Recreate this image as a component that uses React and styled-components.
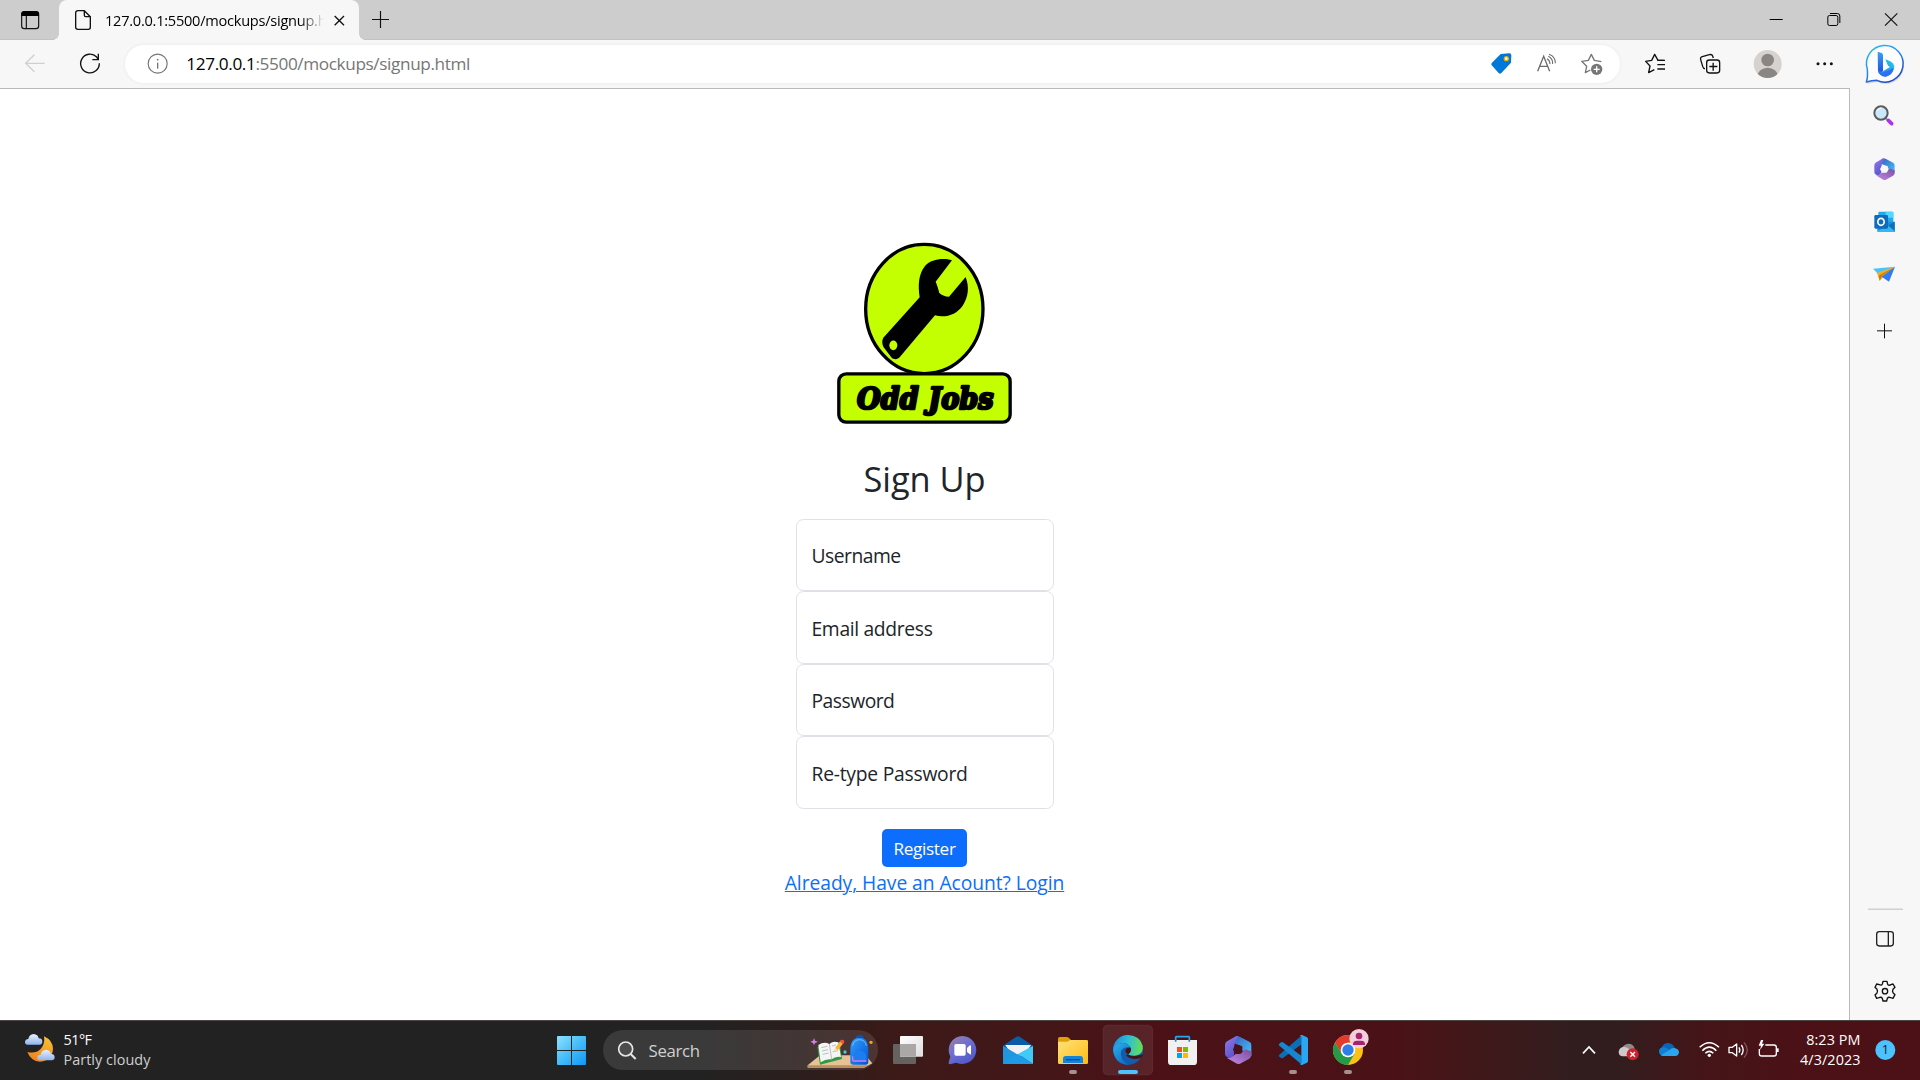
import React from 'react';
import styled, { createGlobalStyle, css } from 'styled-components';

const GlobalStyle = createGlobalStyle`
  *, *::before, *::after { box-sizing: border-box; }
  body {
    margin: 0;
    overflow: hidden;
    background: #fff;
    font-family: "Open Sans", "Noto Sans", sans-serif;
    color: #212529;
  }
`;

/* ---------- shared ---------- */

const Svg = styled.svg`
  display: block;
  flex: none;
`;

/* Icons are drawn on a grid of three units to the pixel. */
const Glyph = ({ box, children }) => (
  <Svg width={box[2] / 3} height={box[3] / 3} viewBox={box.join(' ')} fill="none">
    {children}
  </Svg>
);

const Spacer = styled.div`
  flex: 1;
`;

const Screen = styled.div`
  display: flex;
  flex-direction: column;
  width: 1920px;
  height: 1080px;
  overflow: hidden;
`;

/* ---------- title bar ---------- */

const TitleBar = styled.header`
  display: flex;
  flex: none;
  height: 40px;
  background: #cdcdcd;
  box-shadow: inset 0 -1px 0 #c2c2c2;
`;

const Tab = styled.div`
  position: relative;
  display: flex;
  align-items: center;
  width: 300px;
  height: 40px;
  background: #f7f7f7;
  border-radius: 8px 8px 0 0;

  &::before,
  &::after {
    content: "";
    position: absolute;
    bottom: 0;
    width: 6px;
    height: 6px;
  }
  &::before {
    left: -6px;
    background: radial-gradient(circle at 0 0, transparent 5.5px, #f7f7f7 6px);
  }
  &::after {
    right: -6px;
    background: radial-gradient(circle at 100% 0, transparent 5.5px, #f7f7f7 6px);
  }
`;

const TabTitle = styled.span`
  width: 219px;
  overflow: hidden;
  white-space: nowrap;
  font-size: 14.6px;
  line-height: 40px;
  letter-spacing: -0.26px;
  color: #000;
  mask-image: linear-gradient(90deg, #000 195px, transparent 219px);
`;

/* ---------- toolbar ---------- */

const Toolbar = styled.div`
  display: flex;
  flex: none;
  align-items: center;
  height: 48px;
  background: #f7f7f7;
`;

const AddressBar = styled.div`
  display: flex;
  align-items: center;
  width: 1495px;
  height: 38px;
  border-radius: 19px;
  background: #fff;
  box-shadow: 0 0 4px rgba(0, 0, 0, 0.06);
`;

const Url = styled.span`
  font-size: 17.2px;
  line-height: 38px;
  letter-spacing: -0.38px;
  color: #767676;

  b {
    font-weight: 400;
    color: #000;
  }
`;

/* ---------- page ---------- */

const Body = styled.div`
  display: flex;
  flex: none;
  height: 932px;
`;

const Page = styled.main`
  display: flex;
  flex-direction: column;
  align-items: center;
  width: 1850px;
  padding-top: 141px;
  border-top: 1px solid #bababa;
  border-right: 1px solid #bababa;
  background: #fff;
`;

const Heading = styled.h1`
  margin: 28px 0 19px;
  font-size: 34.4px;
  font-weight: 400;
  line-height: 42px;
  letter-spacing: -0.05px;
`;

const Fields = styled.div`
  display: flex;
  flex-direction: column;
  width: 258px;
`;

const Field = styled.label`
  display: flex;
  align-items: center;
  height: 73px;
  padding: 1px 0 0 15px;
  border: 1px solid #dee2e6;
  border-radius: 7.5px;
  font-size: 19.3px;
  letter-spacing: ${(p) => p.$tracking}px;
  cursor: text;

  &:nth-child(odd) {
    height: 72px;
  }
`;

const RegisterButton = styled.button`
  width: 85px;
  height: 38px;
  margin-top: 20px;
  padding: 1px 0 0;
  border: 0;
  border-radius: 5px;
  background: #0d6efd;
  color: #fff;
  font: 400 17.2px/37px "Open Sans", "Noto Sans", sans-serif;
  letter-spacing: -0.35px;
`;

const LoginLink = styled.a`
  margin-top: 1px;
  font-size: 19.3px;
  line-height: 30px;
  letter-spacing: -0.07px;
  color: #0d6efd;
  text-decoration: underline;
  text-decoration-thickness: 1px;
  text-underline-offset: 1px;
  text-decoration-skip-ink: auto;
`;

/* ---------- sidebar ---------- */

const Sidebar = styled.aside`
  display: flex;
  flex-direction: column;
  width: 70px;
  background: #f7f7f7;
`;

/* ---------- taskbar ---------- */

const Taskbar = styled.footer`
  display: flex;
  flex: none;
  height: 60px;
  border-top: 1px solid #4d4543;
  background: linear-gradient(
    90deg,
    #222222 0, #222222 700px, #2c1e1c 810px, #3b1a18 890px, #431618 1040px,
    #4b1116 1150px, #4a1217 1400px, #431719 1460px, #321d1e 1570px,
    #321d1e 1620px, #441518 1700px, #4b1116 1800px, #4b1116 1920px
  );

  > svg { margin-top: -1px; }
`;

const Weather = styled.div`
  display: flex;
  flex-direction: column;
  width: 476.7px;
  margin-left: -1px;
  padding-top: 9px;
`;

const textLine = css`
  font-size: 14.4px;
  line-height: 20px;
  white-space: nowrap;
`;

const WeatherLine = styled.span`
  ${textLine}
  color: ${(p) => p.$color};
  letter-spacing: ${(p) => p.$tracking}px;
`;

const SearchBox = styled.div`
  display: flex;
  align-items: center;
  width: 275px;
  height: 40px;
  margin: 9px 0 0;
  border-radius: 20px;
  background: rgba(255, 255, 255, 0.11);
  overflow: hidden;
`;

const SearchLabel = styled.span`
  flex: 1;
  font-size: 16.8px;
  color: #d0d0d0;
  letter-spacing: -0.3px;
`;

const Clock = styled.div`
  display: flex;
  flex-direction: column;
  align-items: flex-end;
  width: 74px;
  padding-top: 9px;
`;

const ClockLine = styled.span`
  ${textLine}
  color: #fff;
  letter-spacing: ${(p) => p.$tracking}px;
`;

const SvgLabel = styled.text`
  font-family: ${(p) => p.$family || '"Open Sans", sans-serif'};
  font-size: ${(p) => p.$size}px;
  font-weight: ${(p) => p.$weight || 400};
  font-style: ${(p) => p.$style || 'normal'};
`;

/* ---------- drawings ---------- */

const OddJobsLogo = () => (
  <Glyph box={[0, 0, 626, 600]}>
    <ellipse cx="313" cy="237" rx="176" ry="194" fill="#c3ff00" stroke="#000" strokeWidth="10" />
    <path
      d="M396 91C372 83 334 86 315 108C295 133 294 166 299 202L190 323C185 331 186 343 191 352L215 383C222 389 233 389 239 382L345 256C378 264 409 254 428 227C446 200 448 170 437 141L387 200C374 200 365 195 358 189C355 176 351 164 347 155Z"
      fill="#000"
    />
    <ellipse cx="220" cy="346" rx="12" ry="14.5" fill="#c3ff00" />
    <rect x="56.500" y="431.500" width="514" height="145" rx="22" fill="#c3ff00" stroke="#000" strokeWidth="10" />
    <SvgLabel
      x="111" y="536" textLength="410" lengthAdjust="spacingAndGlyphs"
      $family={'"DejaVu Serif", serif'} $size={91} $weight={700} $style="italic"
      fill="#000" stroke="#000" strokeWidth="8" strokeLinejoin="round"
    >
      Odd Jobs
    </SvgLabel>
  </Glyph>
);

const TabActionsIcon = () => (
  <Glyph box={[0, 0, 177, 120]}>
    <rect x="65" y="35" width="51" height="51" rx="8" stroke="#111" strokeWidth="3.5" />
    <path d="M64 48V43Q64 34 73 34H108Q117 34 117 43V48Z" fill="#000" />
    <path d="M79 48V86" stroke="#111" strokeWidth="3.5" />
  </Glyph>
);

const DocumentIcon = () => (
  <Glyph box={[177, 0, 138, 120]}>
    <path d="M234 32H253L271 50V82Q271 88 265 88H234Q227 88 227 82V39Q227 32 234 32Z" stroke="#111" strokeWidth="4" strokeLinejoin="round" />
    <path d="M253 32V46Q253 50 257 50H271" stroke="#111" strokeWidth="4" />
  </Glyph>
);

const TabCloseIcon = () => (
  <Glyph box={[972, 0, 105, 120]}>
    <path d="M1004 48L1032 76M1032 48L1004 76" stroke="#111" strokeWidth="4" />
  </Glyph>
);

const NewTabIcon = () => (
  <Glyph box={[1077, 0, 130, 120]}>
    <path d="M1141.500 33V84M1116 58.500H1167" stroke="#111" strokeWidth="3.5" />
  </Glyph>
);

const WindowButtons = () => (
  <>
    <Glyph box={[880, 0, 154, 120]}>
      <path d="M930 58.500H969" stroke="#000" strokeWidth="3" />
    </Glyph>
    <Glyph box={[1034, 0, 172, 120]}>
      <rect x="1102.500" y="46.500" width="30" height="30" rx="5" stroke="#000" strokeWidth="3" />
      <path d="M1109 40.500H1131Q1138.500 40.500 1138.500 48V69" stroke="#000" strokeWidth="3" />
    </Glyph>
    <Glyph box={[1206, 0, 174, 120]}>
      <path d="M1275 40L1312 77M1312 40L1275 77" stroke="#111" strokeWidth="3.500" />
    </Glyph>
  </>
);

const BackIcon = () => (
  <Glyph box={[0, 120, 180, 144]}>
    <path d="M134 190H77M103 164L77 190L103 215" stroke="#cfcfcf" strokeWidth="4" />
  </Glyph>
);

const ReloadIcon = () => (
  <Glyph box={[180, 120, 195, 144]}>
    <path d="M298 190A28 28 0 1 1 290 171L295 178" stroke="#111" strokeWidth="4" />
    <path d="M295 161V179H277" stroke="#111" strokeWidth="4" />
  </Glyph>
);

const InfoIcon = () => (
  <Glyph box={[375, 120, 184, 144]}>
    <circle cx="473" cy="191" r="28.500" stroke="#767676" strokeWidth="3.500" />
    <path d="M473 188V206" stroke="#767676" strokeWidth="4" />
    <circle cx="473" cy="179" r="2.500" fill="#767676" />
  </Glyph>
);

const TagIcon = () => (
  <Glyph box={[60, 120, 130, 144]}>
    <path d="M122 162L148 160Q154 160 154 166L153 188L124 219Q120 223 116 219L95 196Q92 192 96 188Z" fill="#0078d7" />
    <circle cx="139" cy="176" r="6" fill="#fff" stroke="#f5a800" strokeWidth="4" />
  </Glyph>
);

const ReadAloudIcon = () => (
  <Glyph box={[190, 120, 140, 144]}>
    <path d="M234 214L252 169L270 214M240 199H264" stroke="#6c6c6c" strokeWidth="4" />
    <path d="M262 176Q271 181 271 192M266 169Q280 176 279 192M268 163Q288 170 287 190" stroke="#6c6c6c" strokeWidth="3.200" />
  </Glyph>
);

const AddFavoriteIcon = () => (
  <Glyph box={[330, 120, 150, 144]}>
    <path d="M424 185L403 181L394 163L385 181L365 184L380 199L376 218L391 210" stroke="#767676" strokeWidth="4" strokeLinejoin="round" />
    <circle cx="410" cy="208" r="17" fill="#767676" />
    <path d="M410 199V217M401 208H419" stroke="#fff" strokeWidth="4" />
  </Glyph>
);

const FavoritesIcon = () => (
  <Glyph box={[480, 120, 180, 144]}>
    <path d="M611 181H594L584 163L575 181L557 184L570 198L566 218L583 209" stroke="#111" strokeWidth="4" strokeLinejoin="round" />
    <path d="M592 181H615M592 194H615M592 207H615" stroke="#111" strokeWidth="4" />
  </Glyph>
);

const CollectionsIcon = () => (
  <Glyph box={[660, 120, 190, 144]}>
    <path d="M735 206Q730 206 728 199L722 179Q720 172 727 170L748 164Q756 162 758 168L760 174" stroke="#111" strokeWidth="4" />
    <rect x="740" y="180" width="39" height="39" rx="8" stroke="#111" strokeWidth="4" />
    <path d="M759.500 188V212M748 199.500H772" stroke="#111" strokeWidth="4" />
  </Glyph>
);

const AvatarIcon = () => (
  <Glyph box={[850, 120, 150, 144]}>
    <clipPath id="avatar"><circle cx="924" cy="192" r="42" /></clipPath>
    <circle cx="924" cy="192" r="42" fill="#d5d2cf" />
    <g clipPath="url(#avatar)" fill="#8a8683">
      <circle cx="924" cy="180" r="19" />
      <ellipse cx="924" cy="230" rx="31" ry="27" />
    </g>
  </Glyph>
);

const MoreIcon = () => (
  <Glyph box={[1000, 120, 180, 144]}>
    <g fill="#111">
      <circle cx="1075" cy="191" r="4.500" />
      <circle cx="1095" cy="191" r="4.500" />
      <circle cx="1115" cy="191" r="4.500" />
    </g>
  </Glyph>
);

const BingIcon = () => (
  <Glyph box={[1180, 120, 200, 144]}>
    <defs>
      <linearGradient id="bingRim" x1="0" y1="0" x2="0.6" y2="1">
        <stop offset="0" stopColor="#22c7ee" />
        <stop offset="0.5" stopColor="#2f8df0" />
        <stop offset="1" stopColor="#1d49cf" />
      </linearGradient>
      <linearGradient id="bingStem" x1="0" y1="0" x2="0" y2="1">
        <stop offset="0" stopColor="#3aa0f5" />
        <stop offset="1" stopColor="#1a4ee0" />
      </linearGradient>
      <linearGradient id="bingBowl" x1="1" y1="0" x2="0" y2="1">
        <stop offset="0" stopColor="#25d3e6" />
        <stop offset="1" stopColor="#2270ee" />
      </linearGradient>
    </defs>
    <path d="M1220 246L1224 209A55 55 0 1 1 1252 241Q1236 243 1220 246Z" fill="#0002" transform="translate(2 5)" />
    <path d="M1220 246Q1225 232 1223 208A55 55 0 1 1 1252 241Q1236 241 1220 246Z" fill="#fdfdfd" stroke="url(#bingRim)" strokeWidth="4.500" strokeLinejoin="round" />
    <path d="M1254 155L1266 159Q1270 161 1270 166V212L1262 222Q1255 220 1255 211Z" fill="url(#bingStem)" />
    <path d="M1255 211Q1257 225 1270 227L1279 230Q1302 222 1304 200Q1302 188 1290 183L1277 178L1285 197L1291 201L1270 214Q1262 218 1255 211Z" fill="url(#bingBowl)" />
    <path d="M1258 219Q1270 222 1302 203Q1300 225 1277 230Q1264 230 1258 219Z" fill="#2f6ff0" />
  </Glyph>
);

const SideSearchIcon = () => (
  <Glyph box={[30, 24, 210, 166]}>
    <path d="M136 114L143 121" stroke="#999" strokeWidth="6" />
    <path d="M145 121L155 131" stroke="#b22ff0" strokeWidth="11" strokeLinecap="round" />
    <circle cx="123" cy="99" r="20" fill="#c9e8fb" stroke="#5b5b5b" strokeWidth="6" />
    <path d="M111 93A14 14 0 0 1 125 84" stroke="#fff" strokeWidth="3" />
  </Glyph>
);

/* Hexagonal ring made of three overlapping wings. */
const OfficeShape = ({ id, place }) => (
  <g transform={place}>
    <defs>
      <linearGradient id={`${id}a`} x1="0" y1="0" x2="0.6" y2="1">
        <stop offset="0" stopColor="#8f7ce8" /><stop offset="1" stopColor="#5b52cc" />
      </linearGradient>
      <linearGradient id={`${id}b`} x1="0" y1="0" x2="1" y2="1">
        <stop offset="0" stopColor="#3a5fc8" /><stop offset="1" stopColor="#45c8f5" />
      </linearGradient>
      <linearGradient id={`${id}c`} x1="0" y1="1" x2="1" y2="0">
        <stop offset="0" stopColor="#c58be8" /><stop offset="1" stopColor="#7a4fa0" />
      </linearGradient>
    </defs>
    <path d="M33 1Q38 -1 44 2L73 17Q79 20 79 27V60L52 44V31L27 22V5Z" fill={`url(#${id}b)`} />
    <path d="M33 1Q37 0 40 1L29 22L27 56Q18 70 7 64Q0 60 0 54V27Q0 20 6 16Z" fill={`url(#${id}a)`} />
    <path d="M79 46V57Q79 64 73 68L45 83Q39 86 33 82L6 66Q16 68 25 59L32 54L47 53L60 40Z" fill={`url(#${id}c)`} />
  </g>
);

const SideOfficeIcon = () => (
  <Glyph box={[30, 190, 210, 160]}>
    <OfficeShape id="so" place="translate(103 236) scale(0.77)" />
    <path d="M125 259H141L146 268L140 279H127L120 269Z" fill="#f7f7f7" />
  </Glyph>
);

const OutlookIcon = () => (
  <Glyph box={[30, 350, 210, 155]}>
    <rect x="115" y="394" width="45" height="36" rx="3" fill="#28a8ea" />
    <path d="M137 394H157Q160 394 160 397V412H137Z" fill="#50d9ff" />
    <path d="M115 408H138V425H115Z" fill="#0a63b0" />
    <path d="M112 424H164V452Q164 455 161 455H115Q112 455 112 452Z" fill="#1490df" />
    <path d="M164 424L138 440L164 455Z" fill="#0f6fbd" />
    <path d="M112 452L145 436L164 452Q164 455 161 455H115Z" fill="#35b8f1" />
    <rect x="103" y="404" width="41" height="41" rx="4" fill="#0f6cbd" />
    <ellipse cx="123" cy="424.500" rx="9.500" ry="10.500" stroke="#fff" strokeWidth="5" />
  </Glyph>
);

const DropIcon = () => (
  <Glyph box={[30, 505, 210, 160]}>
    <path d="M99 567L165 561L112 581Z" fill="#49c3f5" />
    <path d="M165 561L111 580L119 603Z" fill="#f5a91b" />
    <path d="M165 561L126 588L119 603L116 588Z" fill="#c77a12" />
    <path d="M165 561L125 591L147 606Z" fill="#2f7cf0" />
  </Glyph>
);

const SidePlusIcon = () => (
  <Glyph box={[30, 665, 210, 175]}>
    <path d="M133.500 730V774M111 751.500H156" stroke="#111" strokeWidth="3" />
  </Glyph>
);

const SideDivider = () => (
  <Glyph box={[30, 40, 210, 35]}>
    <path d="M84 58.500H189" stroke="#bdbdbd" strokeWidth="3" />
  </Glyph>
);

const SidePanelIcon = () => (
  <Glyph box={[30, 75, 210, 150]}>
    <rect x="110" y="125" width="50" height="43" rx="8" stroke="#222" strokeWidth="4" />
    <path d="M145 125V168" stroke="#222" strokeWidth="4" />
  </Glyph>
);

const SettingsIcon = () => (
  <Glyph box={[30, 225, 210, 165]}>
    <path
      d="M129 274H141L143 283Q147 288 153 284L159 282L165 292L159 298Q156 303 159 308L165 314L159 325L152 323Q145 320 142 325L140 333H129L127 325Q124 320 117 323L110 325L105 315L111 309Q114 303 111 298L105 292L110 282L118 284Q125 287 127 282Z"
      stroke="#111" strokeWidth="4" strokeLinejoin="round"
    />
    <circle cx="135" cy="303.500" r="8" stroke="#111" strokeWidth="4" />
  </Glyph>
);

const cloudPath = 'M8 32Q0 32 0 24Q1 15 10 15Q12 1 26 0Q39 1 41 13Q52 13 52 23Q52 32 43 32Z';

const WeatherIcon = () => (
  <Glyph box={[0, 30, 193.5, 180]}>
    <defs>
      <linearGradient id="moon" x1="0.7" y1="0" x2="0.3" y2="1">
        <stop offset="0" stopColor="#f8c035" /><stop offset="1" stopColor="#f0801f" />
      </linearGradient>
      <linearGradient id="cloud" x1="0" y1="0" x2="0" y2="1">
        <stop offset="0" stopColor="#e9f1fd" /><stop offset="1" stopColor="#8fb4ee" />
      </linearGradient>
    </defs>
    <path d="M132 79Q158 91 159 116Q157 151 120 155Q93 154 82 126Q108 132 122 117Q136 102 132 79Z" fill="url(#moon)" />
    <path d={cloudPath} fill="url(#cloud)" transform="translate(75 72)" />
    <path d={cloudPath} fill="url(#cloud)" transform="translate(112 119)" />
  </Glyph>
);

const StartIcon = () => (
  <Glyph box={[0, 15, 189, 180]}>
    <defs>
      <linearGradient id="win" gradientUnits="userSpaceOnUse" x1="51" y1="63" x2="138" y2="150">
        <stop offset="0" stopColor="#8fe2ff" /><stop offset="0.5" stopColor="#45bdf8" /><stop offset="1" stopColor="#0f96f5" />
      </linearGradient>
    </defs>
    <path d="M53 63H93V105H51V65ZM96 63H136L138 65V105H96ZM51 108H93V150H53L51 148ZM96 108H138V148L136 150H96Z" fill="url(#win)" />
  </Glyph>
);

const SearchIcon = () => (
  <Glyph box={[189, 45, 136, 120]}>
    <circle cx="257" cy="102" r="21" fill="#ffffff18" stroke="#e6e6e6" strokeWidth="5" />
    <path d="M272 117L287 132" stroke="#e6e6e6" strokeWidth="6" />
  </Glyph>
);

const SearchArt = () => (
  <Glyph box={[790, 45, 224, 120]}>
    <defs>
      <linearGradient id="pack" x1="0" y1="0" x2="1" y2="1">
        <stop offset="0" stopColor="#2fa0ff" /><stop offset="1" stopColor="#0453cf" />
      </linearGradient>
    </defs>
    <path d="M801 151L838 121H975L995 145L970 158H801Z" fill="#e6c294" />
    <path d="M801 151H985L970 158H801Z" fill="#b98d5c" />
    <path d="M830 96L838 149L904 132L897 82Z" fill="#2f9a46" />
    <path d="M833 90Q850 78 866 87Q878 76 893 82L901 126Q884 123 873 133Q857 130 840 142Z" fill="#f5f5f5" />
    <path d="M866 87L873 133M842 98L860 94M844 108L862 104M846 118L864 114M874 93L886 90M876 110L892 107" stroke="#9aa3a8" strokeWidth="2" />
    <path d="M880 111L884 98L899 78L908 85L892 105Z" fill="#f9b233" />
    <path d="M880 111L884 98L892 105Z" fill="#f7dcae" />
    <path d="M897 79Q902 72 910 76Q914 82 907 88Z" fill="#f0533a" />
    <path d="M820 69L823 77L832 80L823 84L820 91L817 84L809 80L817 77Z" fill="#d97cf2" />
    <circle cx="913" cy="111" r="5" fill="#50c8d8" />
    <circle cx="991" cy="82" r="5" fill="#f2a51d" />
    <path d="M948 72V66Q957 60 966 66V72" stroke="#0c57c4" strokeWidth="4" />
    <path d="M929 105Q929 68 957 68Q983 68 983 105V141Q983 149 975 149H938Q929 149 929 141Z" fill="url(#pack)" />
    <path d="M936 92Q938 75 957 74Q974 75 977 92" stroke="#6fc0ff" strokeWidth="3" />
    <path d="M936 122Q938 108 957 107Q976 108 977 122V141H936Z" fill="#1b7df0" />
    <path d="M936 124V135Q936 138 940 138H977" stroke="#c67cf5" strokeWidth="4" />
  </Glyph>
);

const TaskViewIcon = () => (
  <Glyph box={[-6, 15, 171, 180]}>
    <defs>
      <linearGradient id="tv" x1="0" y1="0" x2="1" y2="1">
        <stop offset="0" stopColor="#fff" /><stop offset="1" stopColor="#ddd" />
      </linearGradient>
    </defs>
    <rect x="39" y="87" width="69" height="60" rx="3" fill="#666261" />
    <rect x="60" y="63" width="69" height="62" rx="3" fill="url(#tv)" />
    <path d="M60 87H108V125H60Z" fill="#aaa7a6" />
  </Glyph>
);

const ChatIcon = () => (
  <Glyph box={[165, 15, 165, 180]}>
    <defs>
      <linearGradient id="chat" x1="0" y1="0" x2="0.7" y2="1">
        <stop offset="0" stopColor="#9c83a6" /><stop offset="0.5" stopColor="#6d6fd0" /><stop offset="1" stopColor="#5057c9" />
      </linearGradient>
    </defs>
    <path d="M248 63A42 42 0 1 1 229 143L210 148Q204 148 206 142L211 125A42 42 0 0 1 248 63Z" fill="url(#chat)" />
    <rect x="223" y="87" width="34" height="35" rx="5" fill="#fff" />
    <path d="M261 99L270 91Q273 90 273 94V116Q273 120 270 118L261 111Z" fill="#fff" />
  </Glyph>
);

const MailIcon = () => (
  <Glyph box={[330, 15, 165, 180]}>
    <path d="M369 92L409 65Q414 62 419 65L459 92L414 120Z" fill="#0a5ba8" />
    <path d="M376 90H453L436 116L414 126L392 116Z" fill="#f2f2f2" />
    <path d="M369 92L414 119L459 147H372Q369 147 369 144Z" fill="#2196e0" />
    <path d="M459 92L414 117L459 147Z" fill="#3fcaf8" />
    <path d="M369 144L414 117L459 147H372Q369 147 369 144Z" fill="#1e9be6" />
  </Glyph>
);

const ExplorerIcon = () => (
  <Glyph box={[495, 15, 165, 180]}>
    <defs>
      <linearGradient id="fold" x1="0" y1="0" x2="1" y2="1">
        <stop offset="0" stopColor="#ffe27a" /><stop offset="1" stopColor="#fdbb12" />
      </linearGradient>
    </defs>
    <path d="M534 71Q534 66 539 66H560Q564 66 567 69L573 75V90H534Z" fill="#e09f05" />
    <path d="M534 80H562L571 75H620Q624 75 624 79V143Q624 147 620 147H538Q534 147 534 143Z" fill="url(#fold)" />
    <path d="M549 144V131Q549 123 557 123H601Q609 123 609 131V144Z" fill="#1384db" />
    <path d="M558 134H600" stroke="#0b4d93" strokeWidth="4" />
    <rect x="567" y="165" width="24" height="12" rx="6" fill="#a58f90" />
  </Glyph>
);

const EdgeIcon = () => (
  <Glyph box={[660, 15, 165, 180]}>
    <defs>
      <linearGradient id="edgeTop" x1="0" y1="0.5" x2="1" y2="0.6">
        <stop offset="0" stopColor="#1c8fe0" /><stop offset="0.5" stopColor="#2fbfd5" /><stop offset="1" stopColor="#69e04a" />
      </linearGradient>
      <linearGradient id="edgeLow" x1="0" y1="0" x2="0.6" y2="1">
        <stop offset="0" stopColor="#2cb0ea" /><stop offset="1" stopColor="#0f6fcb" />
      </linearGradient>
    </defs>
    <rect x="669.500" y="30.500" width="148" height="149" rx="13" fill="#ffffff14" stroke="#ffffff12" strokeWidth="3" />
    <circle cx="744" cy="105" r="45" fill="#135cab" />
    <path d="M699 105A45 45 0 0 1 744 60Q780 62 788 92Q792 116 768 122Q748 124 744 118Q755 110 752 98Q742 80 722 85Q704 91 699 105Z" fill="url(#edgeTop)" />
    <path d="M699 105Q704 84 730 84Q748 88 750 98Q732 92 723 109Q718 133 745 149Q706 149 699 105Z" fill="url(#edgeLow)" />
    <path d="M744 118Q732 110 738 102Q742 96 752 98Q756 110 744 118Q756 128 790 118L784 128Q752 138 738 121Z" fill="#431519" />
    <rect x="714" y="165" width="60" height="12" rx="6" fill="#4cc2ff" />
  </Glyph>
);

const StoreIcon = () => (
  <Glyph box={[75, 15, 165, 180]}>
    <path d="M137 82V67Q137 65 139 65H176Q178 65 178 67V82" stroke="#23a9ec" strokeWidth="5" />
    <path d="M114 75H201V140Q201 150 191 150H124Q114 150 114 140Z" fill="#f1f1f1" />
    <path d="M137 74V80M178 74V80" stroke="#1b87cf" strokeWidth="5" />
    <path d="M141 96H156V111H141Z" fill="#f25022" />
    <path d="M159 96H174V111H159Z" fill="#7fba00" />
    <path d="M141 114H156V129H141Z" fill="#00a4ef" />
    <path d="M159 114H174V129H159Z" fill="#ffb900" />
  </Glyph>
);

const OfficeIcon = () => (
  <Glyph box={[240, 15, 165, 180]}>
    <OfficeShape id="to" place="translate(285 63)" />
    <path d="M314 91H328L337 105L328 116H315L309 104Z" fill="#4a1217" />
  </Glyph>
);

const CodeIcon = () => (
  <Glyph box={[405, 15, 165, 180]}>
    <path d="M514 62L448 119Q445 122 448 125L453 129Q456 131 459 129L515 88Z" fill="#0b6fb8" />
    <path d="M514 148L448 92Q445 89 448 86L453 82Q456 80 459 82L515 123Z" fill="#1487d0" />
    <path d="M510 61Q513 59 516 60L531 67Q534 69 534 72V139Q534 142 531 143L516 150Q513 151 510 148L514 143V67Z" fill="#2aa7f2" />
    <rect x="477" y="165" width="24" height="12" rx="6" fill="#a58f90" />
  </Glyph>
);

const ChromeIcon = () => (
  <Glyph box={[570, 15, 165, 180]}>
    <circle cx="654" cy="105" r="45" fill="#fbc116" />
    <path d="M615 82.500A45 45 0 0 1 693 82.500H654L634.500 116Z" fill="#e33b2e" />
    <path d="M615 82.500A45 45 0 0 0 654 150L673.500 116L634.500 116Z" fill="#249a48" />
    <circle cx="654" cy="105" r="22" fill="#fff" />
    <circle cx="654" cy="105" r="17" fill="#2f7de9" />
    <circle cx="687" cy="71" r="29" fill="#f3cfde" />
    <circle cx="687" cy="63" r="10" fill="#a8246a" />
    <path d="M669 90Q668 77 681 77H693Q706 77 705 90Z" fill="#a8246a" />
    <rect x="642" y="165" width="24" height="12" rx="6" fill="#a58f90" />
  </Glyph>
);

const TrayIcons = () => (
  <>
    <Glyph box={[30, 15, 115, 180]}>
      <path d="M69 115L87 96L105 115" stroke="#fff" strokeWidth="5" />
    </Glyph>
    <Glyph box={[145, 15, 125, 180]}>
      <path d="M190 94Q200 83 213 87Q225 92 225 104L222 116H200Z" fill="#938b8b" />
      <path d="M188 124Q177 122 177 110Q179 96 193 95Q204 96 212 106L208 124Z" fill="#cfc9c9" />
      <circle cx="219" cy="118" r="18" fill="#d1202b" />
      <path d="M212 111L226 125M226 111L212 125" stroke="#fff" strokeWidth="4" />
    </Glyph>
    <Glyph box={[270, 15, 125, 180]}>
      <path d="M305 98Q310 84 325 84Q338 85 343 97L348 106L306 116Z" fill="#0a64b8" />
      <path d="M306 123Q297 119 297 109Q298 96 312 97Q322 98 340 112Z" fill="#1180d4" />
      <path d="M303 121L328 106Q334 97 344 99Q357 102 357 112Q356 123 346 123H311Q306 123 303 121Z" fill="#2aa5ec" />
    </Glyph>
    <Glyph box={[395, 15, 95, 180]}>
      <path d="M418 97Q447 69 476 97M426 107Q447 86 468 107M435 115Q447 103 459 115" stroke="#fff" strokeWidth="4.500" />
      <circle cx="447" cy="121" r="5" fill="#fff" />
    </Glyph>
    <Glyph box={[490, 15, 90, 180]}>
      <path d="M508 97H518L531 87V123L518 113H508Z" stroke="#fff" strokeWidth="4" strokeLinejoin="round" />
      <path d="M538 97Q543 105 538 113M545 90Q556 105 545 120" stroke="#fff" strokeWidth="4" />
      <path d="M553 82Q573 105 553 128" stroke="#7d5659" strokeWidth="4" />
    </Glyph>
    <Glyph box={[580, 15, 100, 180]}>
      <path d="M617 90H643Q650 90 650 97V116Q650 123 643 123H606Q599 123 599 116V102" stroke="#fff" strokeWidth="4" />
      <path d="M652 100H657V111H652Z" fill="#fff" />
      <path d="M604 75L597 92H604L601 105L614 86H607L611 75Z" fill="#fff" />
    </Glyph>
  </>
);

const NotificationBadge = () => (
  <Glyph box={[902, 15, 178, 180]}>
    <circle cx="975" cy="105" r="30" fill="#4cc2ff" />
    <SvgLabel x="975.500" y="118" textAnchor="middle" $size={38} fill="#14222b">1</SvgLabel>
  </Glyph>
);

/* ---------- app ---------- */

const fields = [
  { label: 'Username', tracking: -0.5 },
  { label: 'Email address', tracking: -0.34 },
  { label: 'Password', tracking: -0.5 },
  { label: 'Re-type Password', tracking: -0.24 },
];

export default function App() {
  return (
    <Screen>
      <GlobalStyle />
      <TitleBar>
        <TabActionsIcon />
        <Tab>
          <DocumentIcon />
          <TabTitle>127.0.0.1:5500/mockups/signup.html</TabTitle>
          <TabCloseIcon />
        </Tab>
        <NewTabIcon />
        <Spacer />
        <WindowButtons />
      </TitleBar>

      <Toolbar>
        <BackIcon />
        <ReloadIcon />
        <AddressBar>
          <InfoIcon />
          <Url><b>127.0.0.1</b>:5500/mockups/signup.html</Url>
          <Spacer />
          <TagIcon />
          <ReadAloudIcon />
          <AddFavoriteIcon />
        </AddressBar>
        <FavoritesIcon />
        <CollectionsIcon />
        <AvatarIcon />
        <MoreIcon />
        <BingIcon />
      </Toolbar>

      <Body>
        <Page>
          <OddJobsLogo />
          <Heading>Sign Up</Heading>
          <Fields>
            {fields.map((f) => (
              <Field key={f.label} $tracking={f.tracking}>{f.label}</Field>
            ))}
          </Fields>
          <RegisterButton>Register</RegisterButton>
          <LoginLink>Already, Have an Acount? Login</LoginLink>
        </Page>
        <Sidebar>
          <SideSearchIcon />
          <SideOfficeIcon />
          <OutlookIcon />
          <DropIcon />
          <SidePlusIcon />
          <Spacer />
          <SideDivider />
          <SidePanelIcon />
          <SettingsIcon />
        </Sidebar>
      </Body>

      <Taskbar>
        <WeatherIcon />
        <Weather>
          <WeatherLine $color="#fff" $tracking={-0.5}>51°F</WeatherLine>
          <WeatherLine $color="#cfcfcf" $tracking={0.05}>Partly cloudy</WeatherLine>
        </Weather>
        <StartIcon />
        <SearchBox>
          <SearchIcon />
          <SearchLabel>Search</SearchLabel>
          <SearchArt />
        </SearchBox>
        <TaskViewIcon />
        <ChatIcon />
        <MailIcon />
        <ExplorerIcon />
        <EdgeIcon />
        <StoreIcon />
        <OfficeIcon />
        <CodeIcon />
        <ChromeIcon />
        <Spacer />
        <TrayIcons />
        <Clock>
          <ClockLine $tracking={0.1}>8:23 PM</ClockLine>
          <ClockLine $tracking={0.1}>4/3/2023</ClockLine>
        </Clock>
        <NotificationBadge />
      </Taskbar>
    </Screen>
  );
}
